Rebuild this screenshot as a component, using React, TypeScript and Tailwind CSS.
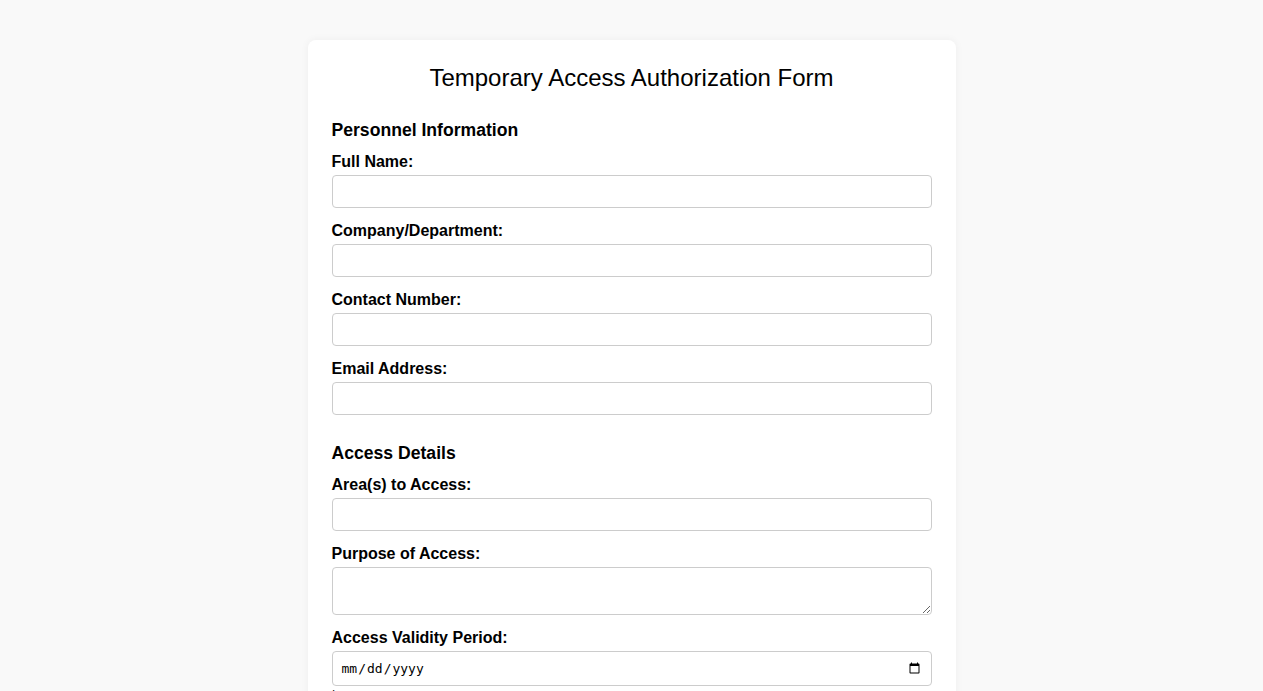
export default function App() {
  const labelCls = "block text-base font-bold leading-[17px] mb-[5px] text-black";
  const inputCls = "block w-full h-[33px] px-2 border border-[#cccccc] rounded-[4px] bg-white text-sm outline-none";
  const dateCls = "block w-full h-[35px] px-2 border border-[#cccccc] rounded-[4px] bg-white text-[13px] outline-none";

  const Field = ({ label }: { label: string }) => (
    <div className="mb-[14px]">
      <label className={labelCls}>{label}</label>
      <input type="text" className={inputCls} />
    </div>
  );

  return (
    <div className="min-h-screen bg-[#f9f9f9] pt-10 pb-10" style={{ fontFamily: '"Liberation Sans", Arial, sans-serif' }}>
      <div className="mx-auto w-[648px] bg-white rounded-lg shadow-[0_0_8px_rgba(0,0,0,0.05)] px-6 pt-6 pb-6">
        <h1 className="text-center text-2xl leading-7 font-normal text-black mb-[28px]">
          Temporary Access Authorization Form
        </h1>

        <section className="mb-[28px]">
          <h2 className="text-[17.6px] font-bold leading-[21px] mb-[12px] text-black">Personnel Information</h2>
          <Field label="Full Name:" />
          <Field label="Company/Department:" />
          <Field label="Contact Number:" />
          <Field label="Email Address:" />
        </section>

        <section>
          <h2 className="text-[17.6px] font-bold leading-[21px] mb-[12px] text-black">Access Details</h2>
          <Field label="Area(s) to Access:" />
          <div className="mb-[14px]">
            <label className={labelCls}>Purpose of Access:</label>
            <textarea className="block w-full h-[48px] px-2 py-1 border border-[#cccccc] rounded-[4px] bg-white text-sm outline-none" />
          </div>
          <div className="mb-[14px]">
            <label className={labelCls}>Access Validity Period:</label>
            <input type="date" className={dateCls} style={{ fontFamily: '"DejaVu Sans Mono", monospace' }} />
            <div className="text-base font-normal leading-[20px] text-black">to</div>
            <input type="date" className={dateCls} style={{ fontFamily: '"DejaVu Sans Mono", monospace' }} />
          </div>
          <Field label="Authorized By:" />
        </section>
      </div>
    </div>
  );
}
